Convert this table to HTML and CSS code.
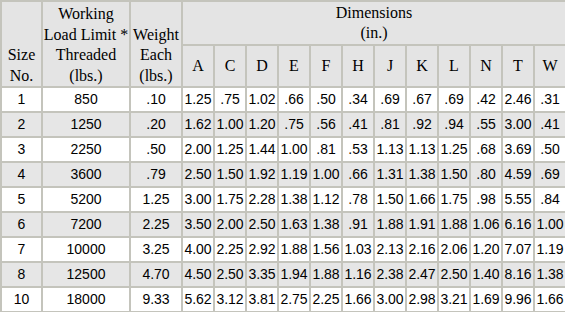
FILE: index.html
```html
<!DOCTYPE html>
<html>
<head>
<meta charset="utf-8">
<link rel="stylesheet" href="styles.css">
</head>
<body>
<table class="spec">
<colgroup>
<col class="c-size"><col class="c-wll"><col class="c-wt">
<col class="c-d"><col class="c-d"><col class="c-d"><col class="c-d"><col class="c-d"><col class="c-d">
<col class="c-d"><col class="c-d"><col class="c-d"><col class="c-d"><col class="c-d"><col class="c-d">
</colgroup>
<thead>
<tr class="h1">
<th rowspan="2" class="hd bot">Size<br>No.</th>
<th rowspan="2" class="hd bot">Working<br>Load Limit *<br>Threaded<br>(lbs.)</th>
<th rowspan="2" class="hd bot">Weight<br>Each<br>(lbs.)</th>
<th colspan="12" class="hd">Dimensions<br>(in.)</th>
</tr>
<tr class="h2">
<th class="hd">A</th><th class="hd">C</th><th class="hd">D</th><th class="hd">E</th><th class="hd">F</th><th class="hd">H</th><th class="hd">J</th><th class="hd">K</th><th class="hd">L</th><th class="hd">N</th><th class="hd">T</th><th class="hd">W</th>
</tr>
</thead>
<tbody>
<tr><td>1</td><td>850</td><td>.10</td><td>1.25</td><td>.75</td><td>1.02</td><td>.66</td><td>.50</td><td>.34</td><td>.69</td><td>.67</td><td>.69</td><td>.42</td><td>2.46</td><td>.31</td></tr>
<tr><td>2</td><td>1250</td><td>.20</td><td>1.62</td><td>1.00</td><td>1.20</td><td>.75</td><td>.56</td><td>.41</td><td>.81</td><td>.92</td><td>.94</td><td>.55</td><td>3.00</td><td>.41</td></tr>
<tr><td>3</td><td>2250</td><td>.50</td><td>2.00</td><td>1.25</td><td>1.44</td><td>1.00</td><td>.81</td><td>.53</td><td>1.13</td><td>1.13</td><td>1.25</td><td>.68</td><td>3.69</td><td>.50</td></tr>
<tr><td>4</td><td>3600</td><td>.79</td><td>2.50</td><td>1.50</td><td>1.92</td><td>1.19</td><td>1.00</td><td>.66</td><td>1.31</td><td>1.38</td><td>1.50</td><td>.80</td><td>4.59</td><td>.69</td></tr>
<tr><td>5</td><td>5200</td><td>1.25</td><td>3.00</td><td>1.75</td><td>2.28</td><td>1.38</td><td>1.12</td><td>.78</td><td>1.50</td><td>1.66</td><td>1.75</td><td>.98</td><td>5.55</td><td>.84</td></tr>
<tr><td>6</td><td>7200</td><td>2.25</td><td>3.50</td><td>2.00</td><td>2.50</td><td>1.63</td><td>1.38</td><td>.91</td><td>1.88</td><td>1.91</td><td>1.88</td><td>1.06</td><td>6.16</td><td>1.00</td></tr>
<tr><td>7</td><td>10000</td><td>3.25</td><td>4.00</td><td>2.25</td><td>2.92</td><td>1.88</td><td>1.56</td><td>1.03</td><td>2.13</td><td>2.16</td><td>2.06</td><td>1.20</td><td>7.07</td><td>1.19</td></tr>
<tr><td>8</td><td>12500</td><td>4.70</td><td>4.50</td><td>2.50</td><td>3.35</td><td>1.94</td><td>1.88</td><td>1.16</td><td>2.38</td><td>2.47</td><td>2.50</td><td>1.40</td><td>8.16</td><td>1.38</td></tr>
<tr><td>10</td><td>18000</td><td>9.33</td><td>5.62</td><td>3.12</td><td>3.81</td><td>2.75</td><td>2.25</td><td>1.66</td><td>3.00</td><td>2.98</td><td>3.21</td><td>1.69</td><td>9.96</td><td>1.66</td></tr>
</tbody>
</table>
</body>
</html>
```
FILE: styles.css
```css
html, body {
  margin: 0;
  padding: 0;
  background: #ffffff;
}
.spec {
  width: 565px;
  table-layout: fixed;
  border-collapse: collapse;
  border-top: 1px solid #9a9a8c;
  border-right: 1px solid #9a9a8c;
  color: #000;
}
.c-size { width: 41px; }
.c-wll { width: 88px; }
.c-wt { width: 52px; }
.c-d { width: 32px; }
.spec th, .spec td {
  border: 2px solid #c4c4bc;
  padding: 0;
  text-align: center;
  white-space: nowrap;
  overflow: hidden;
}
.spec .hd {
  font-family: "Liberation Serif", "Times New Roman", serif;
  font-weight: 400;
  font-size: 16px;
  line-height: 20.5px;
  background: #e4e4e4;
  vertical-align: middle;
}
.spec .bot {
  vertical-align: bottom;
}
.spec .h1 { height: 44px; }
.spec .h2 { height: 42px; }
.spec td {
  font-family: "Liberation Sans", Arial, sans-serif;
  font-size: 14px;
  height: 23px;
  line-height: 23px;
}
.spec tbody tr:nth-child(even) td {
  background: #e6e6e6;
}
```
